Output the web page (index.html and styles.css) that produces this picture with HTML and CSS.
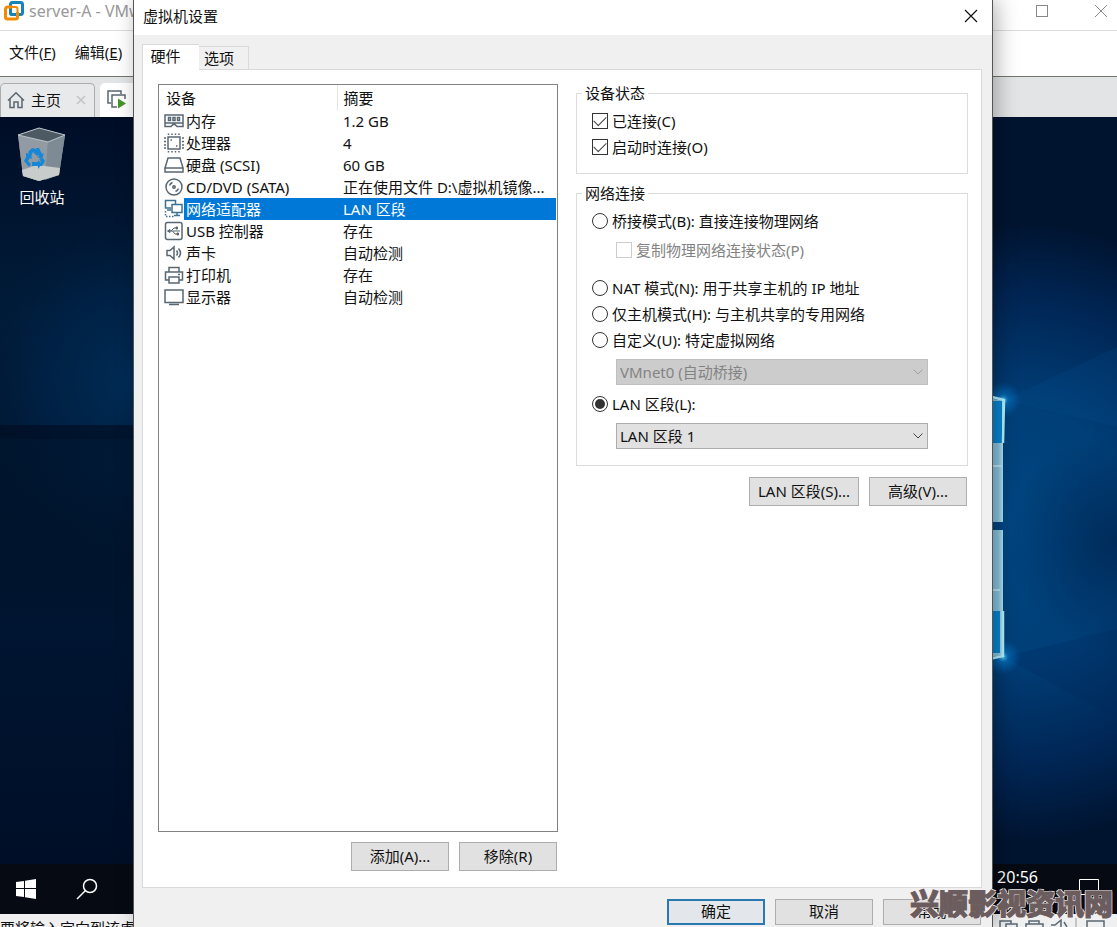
FILE: index.html
```html
<!DOCTYPE html>
<html lang="zh-CN">
<head>
<meta charset="utf-8">
<title>虚拟机设置</title>
<link rel="stylesheet" href="styles.css">
</head>
<body>
<div class="app">
  <header class="titlebar">
    <svg class="logo" width="22" height="22" viewBox="0 0 22 22" fill="none" stroke-width="3">
      <rect x="7.500" y="2.500" width="12" height="12" rx="2" stroke="#1583b5"/>
      <path d="M14.500 12v5a2 2 0 0 1-2 2h-8a2 2 0 0 1-2-2V9a2 2 0 0 1 2-2h5" stroke="#f38b00"/>
      <path d="M7.500 11v1.500a2 2 0 0 0 2 2h3" stroke="#1583b5"/>
      <path d="M9 7h3.500a2 2 0 0 1 2 2v4" stroke="#f38b00" stroke-width="2"/>
    </svg>
    <span class="app-title">server-A - VMw</span>
    <div class="window-controls">
      <button class="plain" aria-label="最大化"><svg width="14" height="14" viewBox="0 0 14 14" fill="none" stroke="#888"><rect x="1.500" y="1.500" width="11" height="11"/></svg></button>
      <button class="plain" aria-label="关闭"><svg width="14" height="14" viewBox="0 0 14 14" fill="none" stroke="#888"><path d="M1 1l12 12M13 1L1 13"/></svg></button>
    </div>
  </header>
  <nav class="menubar">
    <button class="plain">文件(<u>F</u>)</button>
    <button class="plain">编辑(<u>E</u>)</button>
  </nav>
  <div class="vm-tabs">
    <div class="vm-tab">
      <svg width="18" height="18" viewBox="0 0 18 18" fill="none" stroke="#596772" stroke-width="1.500"><path d="M1 9.500L9 1.800l8 7.700M3 8v8.500h4V11h4v5.500h4V8"/></svg>
      <span>主页</span>
      <svg class="tab-close" width="10" height="10" viewBox="0 0 10 10" stroke="#c2c4c5" stroke-width="1.600"><path d="M1 1l8 8M9 1L1 9"/></svg>
    </div>
    <div class="vm-tab vm-tab-active">
      <svg width="20" height="20" viewBox="0 0 20 20" fill="none" stroke="#596772" stroke-width="1.500"><path d="M4 13H1V1h13v3M10 17H5V5h13v4"/><path d="M11 8.500l8 5-8 5z" fill="#43962b" stroke="none"/></svg>
      <span>s</span>
    </div>
  </div>
  <main class="desktop">
    <svg class="wallpaper" viewBox="0 0 1117 797" preserveAspectRatio="none">
      <defs>
        <radialGradient id="glowR" gradientUnits="userSpaceOnUse" cx="1010" cy="415" r="310"><stop offset="0" stop-color="#004682"/><stop offset=".4" stop-color="#003f78"/><stop offset=".75" stop-color="#002655"/><stop offset="1" stop-color="#001430"/></radialGradient>
        <radialGradient id="glowL" gradientUnits="userSpaceOnUse" cx="134" cy="265" r="190"><stop offset="0" stop-color="#002c56"/><stop offset=".5" stop-color="#002247" stop-opacity=".8"/><stop offset="1" stop-color="#001530" stop-opacity="0"/></radialGradient>
        <radialGradient id="shade" gradientUnits="userSpaceOnUse" cx="1117" cy="425" r="110"><stop offset="0" stop-color="#002855" stop-opacity=".85"/><stop offset="1" stop-color="#002855" stop-opacity="0"/></radialGradient>
        <radialGradient id="spark"><stop offset="0" stop-color="#5cc8ff"/><stop offset=".3" stop-color="#098ae0" stop-opacity=".5"/><stop offset="1" stop-color="#0676cc" stop-opacity="0"/></radialGradient>
        <linearGradient id="leftBase" x1="0" y1="0" x2="0" y2="1"><stop offset="0" stop-color="#000d27"/><stop offset=".25" stop-color="#001c38"/><stop offset=".5" stop-color="#00152d"/><stop offset=".65" stop-color="#001531"/><stop offset="1" stop-color="#000d25"/></linearGradient>
        <linearGradient id="dim" x1="0" y1="0" x2="0" y2="1"><stop offset="0" stop-color="#00132b" stop-opacity=".7"/><stop offset="1" stop-color="#00132b" stop-opacity="0"/></linearGradient>
        <linearGradient id="pane" x1="0" y1="0" x2="1" y2="0"><stop offset="0" stop-color="#73b6d9"/><stop offset=".8" stop-color="#8ac4de"/><stop offset="1" stop-color="#b0e4f1"/></linearGradient>
      </defs>
      <rect width="560" height="797" fill="url(#leftBase)"/>
      <rect width="560" height="797" fill="url(#glowL)"/>
      <rect y="322" width="134" height="220" fill="url(#dim)"/>
      <rect y="308" width="134" height="14" fill="#000d20" opacity=".65"/>
      <rect x="560" width="557" height="797" fill="url(#glowR)"/>
      <rect x="990" y="300" width="127" height="250" fill="url(#shade)"/>
      <path d="M1004 283l113 27V230z" fill="#075496" opacity=".18"/>
      <path d="M1004 540l113-28v90z" fill="#00285a" opacity=".25"/>
      <circle cx="1003" cy="283" r="18" fill="url(#spark)"/>
      <circle cx="1003" cy="540" r="18" fill="url(#spark)"/>
      <path d="M980 279l23 5v121h-23z" fill="url(#pane)"/>
      <path d="M980 413h23v125l-23 4z" fill="url(#pane)"/>
      <path d="M980 284h22v42h-22zM980 494h20v42h-20z" fill="#0784d1"/>
      <path d="M980 277l24 6-1 43M980 544l23-5v-45" fill="none" stroke="#aff2ff" stroke-width="2.500"/>
      <path d="M980 349h22M980 473h20" stroke="#b9e3f0" stroke-width="2"/>
    </svg>
    <div class="desktop-icon">
      <svg width="50" height="56" viewBox="0 0 50 56">
        <path d="M1 8L22 1l26 7-6 40-20 6-16-5z" fill="#808b94"/>
        <path d="M1 8l30 7-3 37-6 2-16-5z" fill="#929ba3"/>
        <path d="M31 15l17-7-6 40-14 5z" fill="#7f8b94"/>
        <path d="M5 43l15-5 23 3-1 7-20 6-16-5z" fill="#c8cccb"/>
        <path d="M1 8l21-7 26 7-17 7z" fill="#4d5963" stroke="#bcc4c9"/>
        <g fill="#1687d8"><path d="M11 25l4-4 4 1 4 5-3 2-4-4-2 4z"/><path d="M19 21h3l3 6 2-1-2 6-5-2 2-1z"/><path d="M9 26l5 1 1 5-2-1-2 3 3 3-2 3-5-6 2-4z"/><path d="M15 35h6v-2l4 4-4 5v-3h-6z"/><path d="M22 32l4-1 2 3-3 5h-3l2-4z"/></g>
      </svg>
      <span>回收站</span>
    </div>
    <div class="taskbar">
      <div class="task-left">
        <svg width="20" height="20" viewBox="0 0 20 20" fill="#fff"><path d="M0 3l8-1v7H0zM9 1.800L20 0v9H9zM0 10h8v8l-8-1zM9 10h11v10L9 18.300z"/></svg>
        <svg width="22" height="22" viewBox="0 0 22 22" fill="none" stroke="#fff" stroke-width="1.500"><circle cx="14" cy="8" r="6.500"/><path d="M9.500 12.500L1 21"/></svg>
      </div>
      <div class="task-right">
        <time>20:56</time>
        <svg width="22" height="22" viewBox="0 0 22 22" fill="none" stroke="#fff"><path d="M1.500 1.500h19v15h-6l-4 4v-4h-9z"/></svg>
      </div>
    </div>
  </main>
  <footer class="statusbar">
    <span>要将输入定向到该虚</span>
    <svg width="119" height="18" viewBox="0 0 119 18" fill="none" stroke="#596772" stroke-width="1.500"><path d="M6 11H2V3h11v3M8 6h11v9H8zM31 6V3h10v3M28 14V6h17v8M53 7h4l6-5v12M66 4l3 5"/><path d="M78 0v18" stroke="#999" stroke-width="1"/><path d="M89 3h17v13H89z"/></svg>
  </footer>
</div>

<section class="dialog" role="dialog" aria-labelledby="dlg-title">
  <header class="dialog-title">
    <h1 id="dlg-title">虚拟机设置</h1>
    <button class="plain" aria-label="关闭"><svg width="14" height="14" viewBox="0 0 14 14" stroke="#111" stroke-width="1.200"><path d="M1 1l12 12M13 1L1 13"/></svg></button>
  </header>
  <div class="dialog-body">
    <div class="tabs" role="tablist">
      <button class="tab tab-active" role="tab" aria-selected="true">硬件</button>
      <button class="tab" role="tab" aria-selected="false">选项</button>
    </div>
    <div class="panel">
      <div class="devices">
        <div class="list">
          <table>
            <thead><tr><th class="col-name">设备</th><th>摘要</th></tr></thead>
            <tbody>
              <tr><td><div class="device"><svg viewBox="0 0 20 20"><path d="M1 4h18v11.500h-6l-2-2H9l-2 2H1zM1 12h18"/><path d="M4.500 6.500h2v3h-2zM9 6.500h2v3H9zM13.500 6.500h2v3h-2z"/></svg><span>内存</span></div></td><td>1.2 GB</td></tr>
              <tr><td><div class="device"><svg viewBox="0 0 20 20"><path d="M4 4h12v12H4z"/><path d="M4.500.5v1.500M8 .5V2M11.500.5V2M15 .5V2M4.500 18v1.500M8 18v1.500M11.500 18v1.500M15 18v1.500M0 5h2M0 8.500h2M0 12h2M0 15h2M18 5h2M18 8.500h2M18 12h2M18 15h2M6.500 7h1.500M12 13h1.500"/></svg><span>处理器</span></div></td><td>4</td></tr>
              <tr><td><div class="device"><svg viewBox="0 0 20 20"><path d="M4 3h12l3 10H1zM1 13h18v4H1z"/></svg><span>硬盘 (SCSI)</span></div></td><td>60 GB</td></tr>
              <tr><td><div class="device"><svg viewBox="0 0 20 20"><circle cx="10" cy="10" r="8"/><circle cx="10" cy="10" r="1.200"/><path d="M5.500 8.500a5 5 0 0 1 3-3M14.500 11.500a5 5 0 0 1-3 3"/></svg><span>CD/DVD (SATA)</span></div></td><td>正在使用文件 D:\虚拟机镜像...</td></tr>
              <tr class="selected"><td><div class="device"><svg viewBox="0 0 20 20"><path d="M7 9H1.500V1.500h10V5M3 11h4M8 5.500h10v8H8zM13 13.500V16M10 16.500h6"/><path d="M1.500 12v5.500H11" stroke-dasharray="1.500 1.500"/></svg><span>网络适配器</span></div></td><td>LAN 区段</td></tr>
              <tr><td><div class="device"><svg viewBox="0 0 20 20"><rect x="1.500" y="1.500" width="16.500" height="17" rx="2"/><g stroke-width="1"><path d="M4 10h12M7 10l3-3h2M8.500 10l2.500 3h2"/><path d="M3.500 10l2.500-1.500v3zM12 6h1.500v2H12zM13 12h1.500v2H13z" fill="#596772"/></g></svg><span>USB 控制器</span></div></td><td>存在</td></tr>
              <tr><td><div class="device"><svg viewBox="0 0 20 20"><path d="M3 7.500h3l4-3.500v12l-4-3.500H3zM12.500 7.500q2 2.500 0 5M14.500 5.500q4 4.500 0 9"/></svg><span>声卡</span></div></td><td>自动检测</td></tr>
              <tr><td><div class="device"><svg viewBox="0 0 20 20"><path d="M5 7V2.500h10V7M5 15H1.500V7h17v8H15M5 12h10v6H5zM14 9.500h2"/></svg><span>打印机</span></div></td><td>存在</td></tr>
              <tr><td><div class="device"><svg viewBox="0 0 20 20"><path d="M1 3h18v12.500H1zM5 17.500h10"/></svg><span>显示器</span></div></td><td>自动检测</td></tr>
            </tbody>
          </table>
        </div>
        <div class="actions">
          <button class="btn">添加(A)...</button>
          <button class="btn">移除(R)</button>
        </div>
      </div>
      <div class="settings">
        <fieldset class="group">
          <legend>设备状态</legend>
          <label class="option"><input type="checkbox" checked>已连接(C)</label>
          <label class="option"><input type="checkbox" checked>启动时连接(O)</label>
        </fieldset>
        <fieldset class="group group-network">
          <legend>网络连接</legend>
          <label class="option"><input type="radio" name="net">桥接模式(B): 直接连接物理网络</label>
          <label class="option option-sub"><input type="checkbox" disabled>复制物理网络连接状态(P)</label>
          <label class="option"><input type="radio" name="net">NAT 模式(N): 用于共享主机的 IP 地址</label>
          <label class="option"><input type="radio" name="net">仅主机模式(H): 与主机共享的专用网络</label>
          <label class="option"><input type="radio" name="net">自定义(U): 特定虚拟网络</label>
          <div class="select">
            <select aria-label="特定虚拟网络" disabled><option>VMnet0 (自动桥接)</option></select>
            <svg width="10" height="6" viewBox="0 0 10 6" fill="none" stroke="#a0a0a0"><path d="M.5.5L5 5 9.500.5"/></svg>
          </div>
          <label class="option"><input type="radio" name="net" checked>LAN 区段(L):</label>
          <div class="select">
            <select aria-label="LAN 区段"><option>LAN 区段 1</option></select>
            <svg width="10" height="6" viewBox="0 0 10 6" fill="none" stroke="#444"><path d="M.5.5L5 5 9.500.5"/></svg>
          </div>
        </fieldset>
        <div class="actions">
          <button class="btn btn-wide">LAN 区段(S)...</button>
          <button class="btn">高级(V)...</button>
        </div>
      </div>
    </div>
  </div>
  <footer class="dialog-footer">
    <button class="btn btn-default">确定</button>
    <button class="btn">取消</button>
    <button class="btn">帮助</button>
  </footer>
</section>
<div class="watermark">兴顺影视资讯网</div>
</body>
</html>
```

FILE: styles.css
```css
* { box-sizing: border-box; }

body {
  margin: 0;
  height: 100vh;
  position: relative;
  overflow: hidden;
  font: 15px/20px "Noto Sans", "Noto Sans CJK SC", sans-serif;
  color: #111;
}

button, select, input { font: inherit; color: inherit; margin: 0; }
svg { display: block; flex: none; }

.plain { border: 0; padding: 0; background: none; }

/* Main window */
.app { height: 100%; display: flex; flex-direction: column; background: #fff; }

.titlebar {
  height: 31px;
  padding: 0 9px 8px 3px;
  display: flex;
  align-items: center;
  gap: 4px;
  border-bottom: 1px solid #ddd;
  font-size: 16px;
  color: #999;
}
.app-title { flex: 1; white-space: nowrap; }
.window-controls { display: flex; gap: 45px; }

.menubar {
  height: 46px;
  padding: 0 9px 4px;
  display: flex;
  align-items: center;
  gap: 19px;
  border-bottom: 1px solid #73766f;
}

.vm-tabs {
  height: 40px;
  padding: 6px 0 0;
  display: flex;
  gap: 5px;
  background: #e3e4e6;
}
.vm-tab {
  display: flex;
  align-items: center;
  gap: 6px;
  padding: 0 8px 2px 6px;
  border: 1px solid #aaadaf;
  border-bottom: 0;
  border-radius: 5px 5px 0 0;
  background: #e8e9eb;
}
.vm-tab-active { background: #fff; border-color: #fff; }
.tab-close { margin-left: 9px; }

.desktop {
  flex: 1;
  min-height: 0;
  position: relative;
  display: flex;
  flex-direction: column;
  justify-content: space-between;
  overflow: hidden;
  color: #fff;
}
.wallpaper { position: absolute; inset: 0; width: 100%; height: 100%; }
.desktop-icon {
  position: relative;
  width: 84px;
  padding-top: 10px;
  display: flex;
  flex-direction: column;
  align-items: center;
  gap: 4px;
}
.taskbar {
  position: relative;
  height: 50px;
  padding: 0 17px 0 16px;
  display: flex;
  justify-content: space-between;
  background: #060a12;
}
.task-left { display: flex; align-items: center; gap: 40px; }
.task-right { display: flex; gap: 40px; font-size: 16px; }
.task-right time { padding-top: 3px; }
.task-right svg { margin-top: 14px; }

.statusbar {
  height: 13px;
  padding-top: 4px;
  display: flex;
  align-items: flex-start;
  justify-content: space-between;
  background: #f0f0f0;
  overflow: hidden;
}

/* Settings dialog */
.dialog {
  position: absolute;
  inset: 0 124px 0 133px;
  display: flex;
  flex-direction: column;
  background: #f0f0f0;
  border: solid #555;
  border-width: 0 1px;
  box-shadow: 4px 0 20px rgba(0, 0, 0, .3);
}
.dialog-title {
  height: 35px;
  padding: 0 14px 3px 9px;
  display: flex;
  align-items: center;
  justify-content: space-between;
  background: #fff;
}
.dialog-title h1 { margin: 0; font-size: 15px; font-weight: 400; }

.dialog-body {
  flex: 1;
  min-height: 0;
  padding: 9px 10px 0 8px;
  display: flex;
  flex-direction: column;
}
.tabs { display: flex; align-items: flex-end; height: 25px; }
.tab {
  width: 50px;
  height: 23px;
  padding: 0 9px 0 0;
  border: 1px solid #d9d9d9;
  border-width: 1px 1px 0 0;
  background: #f0f0f0;
}
.tab-active {
  position: relative;
  width: 57px;
  height: 26px;
  margin-bottom: -1px;
  padding: 0 11px 4px 0;
  border-width: 1px 0 0 1px;
  background: #fff;
}
.panel {
  flex: 1;
  min-height: 0;
  padding: 14px 13px 16px 15px;
  display: flex;
  gap: 18px;
  border: 1px solid #d9d9d9;
  background: #fff;
}
.devices { flex: 400; min-width: 0; display: flex; flex-direction: column; gap: 10px; }
.settings { flex: 392; min-width: 0; display: flex; flex-direction: column; gap: 11px; }

.list { flex: 1; min-height: 0; border: 1px solid #828282; padding-right: 1px; overflow: hidden; }
.list table { width: 100%; table-layout: fixed; border-collapse: collapse; white-space: nowrap; }
.list th { height: 25px; padding: 0 0 0 6px; text-align: left; font-weight: 400; }
.list .col-name { width: 178px; border-right: 1px solid #e5e5e5; padding-left: 7px; }
.list td { height: 22px; padding: 0 0 0 6px; }
.list td:first-child { padding-left: 5px; }
.device { display: flex; align-items: center; }
.device svg { width: 20px; height: 20px; fill: none; stroke: #596772; stroke-width: 1.5; }
.device span { flex: 1; padding-left: 2px; line-height: 22px; }
.selected { color: #fff; }
.selected .device svg { stroke: #3e7190; }
.selected .device span, .selected td + td { background: #0078d7; }

.actions { display: flex; justify-content: flex-end; gap: 10px; padding-right: 1px; }
.btn {
  width: 98px;
  height: 29px;
  padding: 0 0 2px;
  border: 1px solid #adadad;
  background: #e1e1e1;
  white-space: nowrap;
}
.btn-wide { width: 110px; }

.group { min-width: 0; margin: 0; padding: 6px 0 13px 15px; border: 1px solid #dcdcdc; }
.group legend { margin-left: -10px; padding: 0 3px; line-height: 18px; }
.group-network { margin-top: -1px; padding-bottom: 16px; }
.option { display: flex; align-items: center; gap: 4px; height: 26px; white-space: nowrap; }
.option-sub { margin: 3px 0 12px 24px; color: #838383; }

.option input {
  appearance: none;
  flex: none;
  display: grid;
  place-items: center;
  width: 16px;
  height: 16px;
  border: 1px solid #333;
  background: #fff;
}
.option input:disabled { border-color: #ccc; }
.option input[type="radio"] { border-radius: 50%; }
.option input[type="radio"]:checked::before {
  content: "";
  width: 10px;
  height: 10px;
  border-radius: 50%;
  background: #333;
}
.option input[type="checkbox"]:checked::before {
  content: "";
  width: 11px;
  height: 6px;
  margin-bottom: 3px;
  border: solid #444;
  border-width: 0 0 1px 1px;
  transform: rotate(-45deg);
}

.select { position: relative; margin: 6px 39px 6px 24px; }
.select:last-child { margin-bottom: 0; }
.select select {
  appearance: none;
  display: block;
  width: 100%;
  height: 26px;
  padding: 0 24px 0 3px;
  border: 1px solid #adadad;
  border-radius: 0;
  background: #e1e1e1;
}
.select select:disabled { opacity: 1; color: #838383; background: #ccc; border-color: #bfbfbf; }
.select svg { position: absolute; right: 5px; top: 10px; pointer-events: none; }

.dialog-footer { display: flex; justify-content: flex-end; gap: 10px; padding: 11px 11px 2px; }
.dialog-footer .btn { height: 26px; }
.btn-default { border: 2px solid #2a79b0; background: #e3e7eb; }

.watermark {
  position: absolute;
  right: 4px;
  bottom: 5px;
  font: 900 29px/40px "Noto Sans CJK SC", sans-serif;
  color: #6b5c5e;
  -webkit-text-stroke: 1px #6b5c5e;
  text-shadow: 1px 1px 0 #f4efef, -1px -1px 0 #f4efef, 1px -1px 0 #f4efef, -1px 1px 0 #f4efef;
}
```
